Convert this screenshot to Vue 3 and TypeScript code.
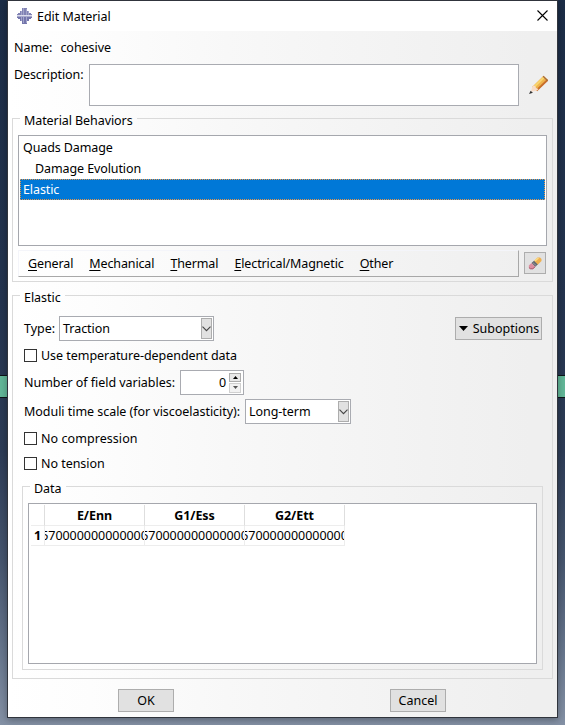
<script setup lang="ts">
import { ref } from 'vue'

interface Behavior {
  name: string
  nested: boolean
}

const behaviors: Behavior[] = [
  { name: 'Quads Damage', nested: false },
  { name: 'Damage Evolution', nested: true },
  { name: 'Elastic', nested: false },
]
const selected = ref('Elastic')
const menus: string[] = ['General', 'Mechanical', 'Thermal', 'Electrical/Magnetic', 'Other']
const columns: string[] = ['E/Enn', 'G1/Ess', 'G2/Ett']
const row: string[] = ['570000000000000', '570000000000000', '570000000000000']
</script>

<template>
  <div class="desktop">
    <div class="strip"></div>
    <main class="window">
      <header class="titlebar">
        <svg class="app-icon" width="16" height="16" viewBox="0 0 16 16" shape-rendering="crispEdges">
          <path d="M5 0h5v3h2v2h2v1h1v1H0V6h1V5h2V3h2z" fill="#8183b4" />
          <path d="M0 9h15v1h-1v1h-2v2h-2v3H5v-3H3v-2H1v-1H0z" fill="#7476ac" />
          <path d="M4 3h1v4H4zM6 0h1v7H6zM9 1h1v6H9zM11 3h1v4h-1zM4 9h1v4H4zM6 9h1v6H6zM9 9h1v6H9z" fill="#a3a5ca" />
          <path d="M0 7h15v1H0z" fill="#dcdded" />
          <path d="M0 8h15v1H0z" fill="#a9abcd" />
        </svg>
        <h1>Edit Material</h1>
        <svg class="close" width="11" height="11" viewBox="0 0 11 11">
          <path d="M.5.5l10 10M10.5.5l-10 10" stroke="#000" stroke-width="1.1" />
        </svg>
      </header>

      <div class="name-row"><span>Name:</span><span>cohesive</span></div>
      <div class="desc-row">
        <label class="desc-label">Description:</label>
        <div class="textarea"></div>
        <svg class="pencil" width="20" height="20" viewBox="0 0 20 20">
          <path d="M3 12L14.500 .8 19 5 8 16z" fill="#efb34c" />
          <path d="M4.500 12.500L15 2.300" stroke="#f8d56f" stroke-width="2" />
          <path d="M7.500 15.500L18.500 5" stroke="#c86d2b" stroke-width="1.800" />
          <path d="M14.500.8L19 5l-.7 1.200L13.700 1.700z" fill="#a66a3d" />
          <path d="M4 10.500L1.500 17l6.500-1.500 1.500-1.500-2.500-1-.8-2z" fill="#f7dcc8" />
          <path d="M1.600 15.800L0 19l3.900-1.300z" fill="#333" />
        </svg>
      </div>

      <fieldset class="group behaviors">
        <legend><span>Material Behaviors</span></legend>
        <ul class="list">
          <li
            v-for="b in behaviors"
            :key="b.name"
            :class="{ nested: b.nested, selected: b.name === selected }"
            @click="selected = b.name"
          >{{ b.name }}</li>
        </ul>
        <div class="menu-row">
          <nav class="menubar">
            <span v-for="m in menus" :key="m"><u>{{ m[0] }}</u>{{ m.slice(1) }}</span>
          </nav>
          <button class="btn erase">
            <svg width="14" height="14" viewBox="0 0 14 14">
              <path d="M6 5L9.500 1.500H12L13.500 3v2L9.500 9z" fill="#efb04e" />
              <path d="M7 4.800L10.500 2" stroke="#fbdc83" stroke-width="1.500" />
              <path d="M3.500 7L6 4.700 9.800 8.500 7.200 10.800z" fill="#62656c" />
              <path d="M5 6.800L8.200 9.500" stroke="#969aa2" />
              <path d="M.8 9.500L3.500 7 7.200 10.800 5 13H2.300L.8 11.500z" fill="#dc8fa0" />
              <path d="M1 11.700L2.500 12.800h2.300L7.200 10.700" stroke="#a75668" fill="none" />
            </svg>
          </button>
        </div>
      </fieldset>

      <fieldset class="group elastic">
        <legend><span>Elastic</span></legend>
        <div class="line type-line">
          <label class="type-label">Type:</label>
          <div class="combo type-combo">
            <span>Traction</span>
            <i class="drop"><svg width="9" height="6" viewBox="0 0 9 6"><path d="M.5.7l4 4 4-4" fill="none" stroke="#444" stroke-width="1.100" /></svg></i>
          </div>
          <button class="btn sub">
            <svg width="9" height="5" viewBox="0 0 9 5"><path d="M0 0h9L4.500 5z" /></svg>
            <span>Suboptions</span>
          </button>
        </div>
        <label class="line check c1"><i class="box"></i><span>Use temperature-dependent data</span></label>
        <div class="line num-line">
          <label class="num-label">Number of field variables:</label>
          <div class="spinner">
            <span>0</span>
            <div class="steps">
              <i><svg width="5" height="3" viewBox="0 0 5 3"><path d="M0 3h5L2.500 0z" /></svg></i>
              <i class="off"><svg width="5" height="3" viewBox="0 0 5 3"><path d="M0 0h5L2.500 3z" fill="#555" /></svg></i>
            </div>
          </div>
        </div>
        <div class="line mod-line">
          <label class="mod-label">Moduli time scale (for viscoelasticity):</label>
          <div class="combo mod-combo">
            <span>Long-term</span>
            <i class="drop"><svg width="9" height="6" viewBox="0 0 9 6"><path d="M.5.7l4 4 4-4" fill="none" stroke="#444" stroke-width="1.100" /></svg></i>
          </div>
        </div>
        <label class="line check c2"><i class="box"></i><span>No compression</span></label>
        <label class="line check c3"><i class="box"></i><span>No tension</span></label>

        <fieldset class="group data">
          <legend><span>Data</span></legend>
          <div class="sheet">
            <div class="grid">
              <div class="cell head index"></div>
              <div v-for="c in columns" :key="c" class="cell head">{{ c }}</div>
              <div class="cell index">1</div>
              <div v-for="(v, i) in row" :key="i" class="cell value"><span>{{ v }}</span></div>
            </div>
          </div>
        </fieldset>
      </fieldset>

      <footer class="actions">
        <button class="btn">OK</button>
        <button class="btn">Cancel</button>
      </footer>
    </main>
  </div>
</template>

<style>
body {
  margin: 0;
  overflow: hidden;
}
</style>

<style scoped>
* {
  box-sizing: border-box;
}
.desktop {
  width: 565px;
  height: 725px;
  padding-left: 7px;
  position: relative;
  font: 12.5px/17px "Noto Sans", "Open Sans", sans-serif;
  letter-spacing: -0.04px;
  color: #000;
  background: linear-gradient(#1c2d47 0, #24344f 300px, #2d3c56 450px, #46556e 560px, #66758c 650px, #8491a5 725px);
}
.strip {
  position: absolute;
  left: 0;
  top: 375px;
  width: 565px;
  height: 23px;
  border: solid #0d1518;
  border-width: 1px 0;
  background: #62b798;
}
.window {
  position: relative;
  width: 551px;
  height: 718px;
  border: 1px solid #30343c;
  background: linear-gradient(90deg, #fff 0, #fdfdfd 15%, #f8f8f8 40%, #f3f3f3 70%, #efefef 95%);
  box-shadow: 0 2px 7px rgba(0, 0, 0, 0.3);
}
.titlebar {
  height: 30px;
  display: flex;
  align-items: center;
  padding: 0 9px 0 9px;
  background: #fff;
}
.app-icon {
  margin: -1px 4px 0 0;
}
.close {
  margin-top: -2px;
}
h1 {
  flex: 1;
  margin: 0;
  font-size: 12.5px;
  font-weight: 400;
}
.name-row {
  display: flex;
  gap: 8px;
  margin: 8px 0 0 6px;
  height: 17px;
}
.desc-row {
  display: flex;
  margin: 8px 0 0 6px;
  height: 42px;
}
.desc-label {
  width: 75px;
  padding-top: 2px;
  letter-spacing: -0.1px;
}
.textarea {
  width: 430px;
  border: 1px solid #a9abb1;
  background: #fff;
}
.pencil {
  margin: 11px 0 0 10px;
}
.group {
  min-width: 0;
  margin: 0;
  border: 1px solid #dadada;
}
legend {
  height: 17px;
  padding: 0 4px;
  white-space: nowrap;
}
legend span {
  display: block;
  padding-top: 2px;
}
.behaviors {
  width: 541px;
  height: 172px;
  margin: 4px 0 0 4px;
  padding: 8px 5px 0;
}
.behaviors > legend {
  margin-left: 2px;
  letter-spacing: -0.08px;
}
.list {
  height: 111px;
  margin: 0;
  padding: 1px;
  list-style: none;
  border: 1px solid #a5a7ad;
  background: #fff;
}
.list li {
  height: 21px;
  padding-left: 3px;
  line-height: 21px;
  letter-spacing: -0.1px;
}
.list li.nested {
  padding-left: 15px;
}
.list li.selected {
  color: #fff;
  background: #0078d7;
  outline: 1px dotted #e6964b;
  outline-offset: -1px;
}
.menu-row {
  display: flex;
  gap: 5px;
  margin-top: 4px;
}
.menubar {
  width: 501px;
  height: 27px;
  display: flex;
  gap: 16px;
  padding: 4px 0 0 9px;
  border: 1px solid #f4f5fa;
  border-right-color: #a8a8a8;
  border-bottom-color: #a8a8a8;
  letter-spacing: -0.12px;
}
.menubar u {
  text-underline-offset: 2px;
}
.btn {
  display: flex;
  align-items: center;
  justify-content: center;
  padding: 0;
  border: 1px solid #adadad;
  border-radius: 0;
  background: #e1e1e1;
  font: inherit;
  color: #000;
}
.erase {
  width: 22px;
  height: 22px;
  margin-top: 2px;
}
.elastic {
  width: 541px;
  height: 392px;
  margin: 5px 0 0 4px;
  padding: 12px 9px 0;
}
.elastic > legend {
  margin-left: -2px;
}
.line {
  display: flex;
  align-items: center;
  margin-left: 2px;
  white-space: nowrap;
}
.type-line,
.num-line,
.mod-line {
  height: 25px;
}
.type-label {
  width: 35px;
}
.num-label {
  width: 156px;
}
.mod-label {
  width: 221px;
}
.combo {
  height: 25px;
  display: flex;
  align-items: center;
  justify-content: space-between;
  padding: 0 1px 0 3px;
  border: 1px solid #a9abb1;
  background: #fff;
}
.type-combo {
  width: 155px;
}
.mod-combo {
  width: 106px;
}
.drop {
  width: 11px;
  height: 21px;
  display: flex;
  align-items: center;
  justify-content: center;
  border: 1px solid #adadad;
  background: #e1e1e1;
}
.sub {
  width: 87px;
  height: 23px;
  gap: 5px;
  margin-left: 241px;
  padding-left: 1px;
}
.check {
  height: 13px;
}
.c1 {
  margin-top: 8px;
}
.num-line {
  margin-top: 8px;
}
.mod-line {
  margin-top: 4px;
}
.c2 {
  margin-top: 8px;
}
.c2 span {
  letter-spacing: 0.06px;
}
.c3 {
  margin-top: 12px;
}
.box {
  width: 13px;
  height: 13px;
  margin-right: 4px;
  border: 1px solid #333;
  background: #fff;
}
.spinner {
  width: 64px;
  height: 25px;
  display: flex;
  align-items: center;
  justify-content: flex-end;
  gap: 3px;
  padding-right: 2px;
  border: 1px solid #a9abb1;
  background: #fff;
}
.steps {
  display: grid;
  gap: 1px;
}
.steps i {
  width: 12px;
  height: 9px;
  display: flex;
  align-items: center;
  justify-content: center;
  border: 1px solid #adadad;
  background: #e8e8e8;
}
.steps .off {
  height: 10px;
  border-color: #d0d0d0;
  background: #f2f2f2;
}
.data {
  width: 521px;
  height: 192px;
  margin-top: 8px;
  padding: 8px 5px 0;
}
.data > legend {
  margin-left: 2px;
}
.sheet {
  width: 509px;
  height: 161px;
  padding: 1px;
  border: 1px solid #a5a7ad;
  background: #fff;
}
.grid {
  display: grid;
  grid-template-columns: 14px 100px 100px 100px;
  grid-template-rows: 21px 20px;
  width: 315px;
  padding-left: 1px;
}
.cell {
  overflow: hidden;
  line-height: 21px;
  text-align: center;
  white-space: nowrap;
  border: solid #ededed;
  border-width: 0 1px 1px 0;
}
.head {
  font-weight: 700;
  border-right-color: #dedede;
}
.cell.index {
  font-weight: 700;
  text-align: right;
  padding-right: 3px;
  line-height: 19px;
}
.value {
  display: flex;
  justify-content: center;
  line-height: 19px;
}
.actions {
  display: flex;
  gap: 216px;
  margin: 10px 0 0 110px;
}
.actions .btn {
  width: 56px;
  height: 23px;
}
</style>
